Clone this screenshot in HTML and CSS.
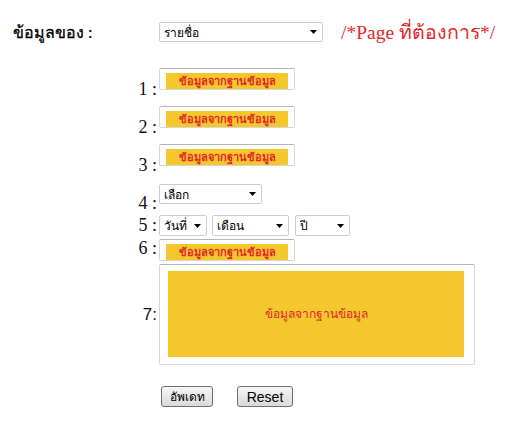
FILE: index.html
```html
<!DOCTYPE html>
<html lang="th">
  <head>
    <meta charset="utf-8" />
    <link rel="stylesheet" href="styles.css">
    <title>ข้อมูล</title>
  </head>

  <body>
    <div class="head">
      <span class="head-label">ข้อมูลของ :</span>
      <span class="pick pick-name">
        <select>
          <option>รายชื่อ</option>
        </select>
        <svg class="caret" width="7" height="4" viewBox="0 0 7 4"><path d="M0 0H7L3.5 4Z" /></svg>
      </span>
      <span class="note">/*Page ที่ต้องการ*/</span>
    </div>

    <div class="form">
      <div class="row row-1">
        <span class="label low">1 :</span>
        <div class="frame"><div class="fill">ข้อมูลจากฐานข้อมูล</div></div>
      </div>
      <div class="row row-2">
        <span class="label low">2 :</span>
        <div class="frame"><div class="fill">ข้อมูลจากฐานข้อมูล</div></div>
      </div>
      <div class="row row-3">
        <span class="label low">3 :</span>
        <div class="frame"><div class="fill">ข้อมูลจากฐานข้อมูล</div></div>
      </div>
      <div class="row row-4">
        <span class="label low">4 :</span>
        <span class="pick pick-choose">
          <select>
            <option>เลือก</option>
          </select>
          <svg class="caret" width="7" height="4" viewBox="0 0 7 4"><path d="M0 0H7L3.5 4Z" /></svg>
        </span>
      </div>
      <div class="row row-5">
        <span class="label flush">5 :</span>
        <span class="pick pick-day">
          <select>
            <option>วันที่</option>
          </select>
          <svg class="caret" width="7" height="4" viewBox="0 0 7 4"><path d="M0 0H7L3.5 4Z" /></svg>
        </span>
        <span class="pick pick-month">
          <select>
            <option>เดือน</option>
          </select>
          <svg class="caret" width="7" height="4" viewBox="0 0 7 4"><path d="M0 0H7L3.5 4Z" /></svg>
        </span>
        <span class="pick pick-year">
          <select>
            <option>ปี</option>
          </select>
          <svg class="caret" width="7" height="4" viewBox="0 0 7 4"><path d="M0 0H7L3.5 4Z" /></svg>
        </span>
      </div>
      <div class="row row-6">
        <span class="label high">6 :</span>
        <div class="frame"><div class="fill">ข้อมูลจากฐานข้อมูล</div></div>
      </div>
      <div class="row row-7">
        <span class="label middle">7:</span>
        <div class="frame frame-big"><div class="fill">ข้อมูลจากฐานข้อมูล</div></div>
      </div>
    </div>

    <div class="actions">
      <button type="submit" class="btn btn-update">อัพเดท</button>
      <button type="reset" class="btn btn-reset">Reset</button>
    </div>
  </body>
</html>
```

FILE: styles.css
```css
body {
  margin: 0;
  background-color: #fff;
  color: #111;
  font-family: "Liberation Serif", "Noto Sans", serif;
}

.head {
  display: flex;
  align-items: center;
  height: 20px;
  padding: 22px 0 0 13px;
}

.head-label {
  flex-shrink: 0;
  width: 146px;
  font-size: 16px;
  color: #000;
  -webkit-text-stroke: 0.3px #000;
}

.note {
  margin-left: 18px;
  font-size: 19.5px;
  color: #e3282c;
  white-space: nowrap;
}

.pick {
  position: relative;
  display: inline-block;
  flex-shrink: 0;
}

.pick select {
  appearance: none;
  -webkit-appearance: none;
  box-sizing: border-box;
  width: 100%;
  height: 100%;
  margin: 0;
  padding: 0 0 0 4px;
  border: 1px solid #c9ccd1;
  border-radius: 2px;
  background: #fff;
  color: #000;
  font-family: "Noto Sans", "DejaVu Sans", sans-serif;
  font-size: 12px;
  outline: none;
}

.caret {
  position: absolute;
  right: 6px;
  top: 50%;
  margin-top: -2px;
  fill: #000;
}

.pick-name {
  width: 164px;
  height: 20px;
}

.pick-choose {
  width: 103px;
  height: 20px;
}

.pick-day {
  width: 48px;
  height: 21px;
}

.pick-month {
  width: 77px;
  height: 21px;
  margin-left: 5px;
}

.pick-year {
  width: 55px;
  height: 21px;
  margin-left: 6px;
}

.form {
  padding-top: 26px;
}

.row {
  display: flex;
  align-items: flex-end;
}

.row-2,
.row-3 {
  margin-top: 16px;
}

.row-4 {
  margin-top: 18px;
}

.row-5 {
  margin-top: 11px;
}

.row-6,
.row-7 {
  margin-top: 3px;
}

.label {
  box-sizing: border-box;
  width: 159px;
  padding-right: 2px;
  text-align: right;
  font-size: 18px;
  line-height: 18px;
  white-space: nowrap;
}

.label.low {
  margin-bottom: -8px;
}

.label.flush {
  margin-bottom: 2px;
}

.label.high {
  margin-bottom: 4px;
}

.label.middle {
  align-self: center;
  font-family: "Liberation Sans", sans-serif;
  font-size: 17px;
}

.frame {
  box-sizing: border-box;
  width: 136px;
  height: 22px;
  padding: 4px 0 0 6px;
  border: 1px solid #d3d6db;
  border-top-color: #b4b6ba;
  border-radius: 2px;
  overflow: hidden;
}

.fill {
  width: 122px;
  height: 16px;
  background-color: #f4c72c;
  color: #e4262b;
  font-family: "Noto Sans", "DejaVu Sans", sans-serif;
  font-size: 11px;
  font-weight: bold;
  line-height: 16px;
  text-align: center;
  white-space: nowrap;
}

.frame-big {
  width: 316px;
  height: 101px;
  padding: 6px 0 0 8px;
}

.frame-big .fill {
  display: flex;
  align-items: center;
  justify-content: center;
  width: 296px;
  height: 86px;
  font-weight: normal;
  font-size: 12px;
}

.actions {
  display: flex;
  gap: 24px;
  padding: 21px 0 0 161px;
}

.btn {
  box-sizing: border-box;
  height: 21px;
  padding: 0;
  border: 1px solid #6f6f6f;
  border-radius: 3px;
  background: linear-gradient(#f6f6f6, #d9d9d9);
  color: #000;
  font-family: "Noto Sans", "Liberation Sans", sans-serif;
  font-size: 12px;
}

.btn-update {
  width: 52px;
}

.btn-reset {
  width: 56px;
  font-family: "Liberation Sans", sans-serif;
  font-size: 14px;
}
```
